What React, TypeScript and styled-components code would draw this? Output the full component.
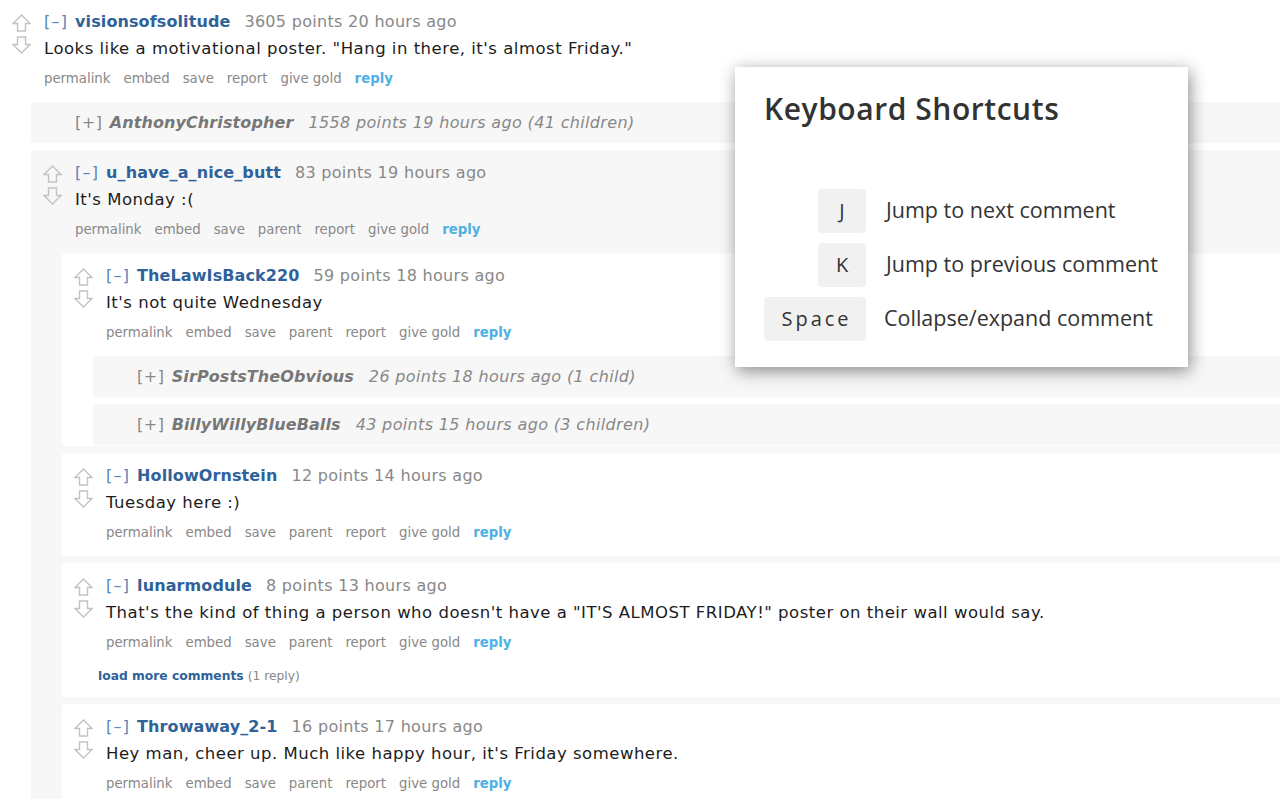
import React from "react";
import styled, { createGlobalStyle } from "styled-components";

const GlobalStyle = createGlobalStyle`
  html, body {
    margin: 0;
    padding: 0;
    background: #ffffff;
    overflow: hidden;
  }
  body {
    font-family: "DejaVu Sans", Verdana, sans-serif;
    width: 1280px;
    height: 800px;
  }
`;

type CommentData = {
  user: string;
  points: number;
  time: string;
  body?: string;
  collapsed?: boolean;
  count?: string;
  showParent?: boolean;
  loadMore?: string;
  children?: CommentData[];
};

const data: CommentData = {
  user: "visionsofsolitude",
  points: 3605,
  time: "20 hours ago",
  body: 'Looks like a motivational poster. "Hang in there, it\'s almost Friday."',
  showParent: false,
  children: [
    {
      collapsed: true,
      user: "AnthonyChristopher",
      points: 1558,
      time: "19 hours ago",
      count: "41 children",
    },
    {
      user: "u_have_a_nice_butt",
      points: 83,
      time: "19 hours ago",
      body: "It's Monday :(",
      showParent: true,
      children: [
        {
          user: "TheLawIsBack220",
          points: 59,
          time: "18 hours ago",
          body: "It's not quite Wednesday",
          showParent: true,
          children: [
            {
              collapsed: true,
              user: "SirPostsTheObvious",
              points: 26,
              time: "18 hours ago",
              count: "1 child",
            },
            {
              collapsed: true,
              user: "BillyWillyBlueBalls",
              points: 43,
              time: "15 hours ago",
              count: "3 children",
            },
          ],
        },
        {
          user: "HollowOrnstein",
          points: 12,
          time: "14 hours ago",
          body: "Tuesday here :)",
          showParent: true,
        },
        {
          user: "lunarmodule",
          points: 8,
          time: "13 hours ago",
          body: 'That\'s the kind of thing a person who doesn\'t have a "IT\'S ALMOST FRIDAY!" poster on their wall would say.',
          showParent: true,
          loadMore: "1 reply",
        },
        {
          user: "Throwaway_2-1",
          points: 16,
          time: "17 hours ago",
          body: "Hey man, cheer up. Much like happy hour, it's Friday somewhere.",
          showParent: true,
        },
      ],
    },
  ],
};

const Page = styled.div`
  position: relative;
  width: 1280px;
  height: 800px;
  overflow: hidden;
  margin-top: -1px;
`;

const Box = styled.div<{ $depth: number }>`
  background: ${(p) => (p.$depth === 0 ? "transparent" : p.$depth % 2 === 1 ? "#f7f7f7" : "#ffffff")};
  border-radius: ${(p) => (p.$depth === 0 ? "0" : "3px 0 0 3px")};
  padding-left: 12px;
`;

const Entry = styled.div`
  display: flex;
  padding-top: 12px;
`;

const Arrows = styled.div`
  width: 19px;
  flex: none;
  display: flex;
  flex-direction: column;
  gap: 4px;
  padding-top: 3px;
  margin-right: 13px;
`;

const Main = styled.div`
  flex: 1;
  min-width: 0;
`;

const Tagline = styled.div`
  font-size: 16px;
  line-height: 20px;
  padding-top: 1px;
  color: #888888;
  white-space: nowrap;
  letter-spacing: 0.3px;
`;

const Toggle = styled.span`
  color: #5b86b6;
  margin-right: 7px;
  letter-spacing: 1.2px;
`;

const User = styled.span`
  color: #2f6299;
  font-weight: bold;
  margin-right: 14px;
  letter-spacing: 0.1px;
`;

const Body = styled.div`
  margin-top: 7px;
  font-size: 16.5px;
  line-height: 20px;
  letter-spacing: 0.5px;
  color: #1c1c1c;
  white-space: nowrap;
`;

const Buttons = styled.ul`
  list-style: none;
  margin: 10px 0 0;
  padding: 0;
  display: flex;
  gap: 13px;
  font-size: 13.3px;
  line-height: 20px;
  color: #888888;
`;

const Btn = styled.li<{ $reply?: boolean }>`
  color: ${(p) => (p.$reply ? "#4eb0e4" : "#888888")};
  font-weight: ${(p) => (p.$reply ? "bold" : "normal")};
`;

const Children = styled.div`
  margin-left: 19px;
  margin-top: 13px;
  display: flex;
  flex-direction: column;
  gap: 7px;
  padding-bottom: 1px;
`;

const LeafSpacer = styled.div`
  height: 13px;
`;

const LoadMore = styled.div`
  margin: 13px 0 0 -8px;
  font-size: 12.3px;
  line-height: 20px;
  color: #888888;
  padding-bottom: 11px;
`;

const LoadLink = styled.span`
  color: #2f6299;
  font-weight: bold;
  margin-right: 4px;
`;

const Collapsed = styled.div<{ $depth: number }>`
  background: ${(p) => (p.$depth % 2 === 1 ? "#f7f7f7" : "#ffffff")};
  border-radius: 3px 0 0 3px;
  height: 41px;
  display: flex;
  align-items: center;
  padding-left: 44px;
  font-size: 16px;
  color: #888888;
  white-space: nowrap;
`;

const CollapsedBracket = styled.span`
  color: #888888;
  margin-right: 7px;
  letter-spacing: 0.6px;
`;

const CollapsedUser = styled.span`
  font-style: italic;
  font-weight: bold;
  color: #777777;
  margin-right: 15px;
  letter-spacing: 0.1px;
`;

const CollapsedMeta = styled.span`
  font-style: italic;
  color: #888888;
  letter-spacing: 0.35px;
`;

const Arrow = ({ down }: { down?: boolean }) => (
  <svg width="19" height="18" viewBox="0 0 19 18" style={{ display: "block" }}>
    <path
      d={
        down
          ? "M9.5 17 L18 8.5 L13.5 8.5 L13.5 1 L5.5 1 L5.5 8.5 L1 8.5 Z"
          : "M9.5 1 L18 9.5 L13.5 9.5 L13.5 17 L5.5 17 L5.5 9.5 L1 9.5 Z"
      }
      fill="none"
      stroke="#c2c2c2"
      strokeWidth="1.4"
      strokeLinejoin="miter"
    />
  </svg>
);

const Comment = ({ c, depth }: { c: CommentData; depth: number }) => {
  if (c.collapsed) {
    return (
      <Collapsed $depth={depth}>
        <CollapsedBracket>[+]</CollapsedBracket>
        <CollapsedUser>{c.user}</CollapsedUser>
        <CollapsedMeta>
          {c.points} points {c.time} ({c.count})
        </CollapsedMeta>
      </Collapsed>
    );
  }
  const buttons = ["permalink", "embed", "save", ...(c.showParent ? ["parent"] : []), "report", "give gold"];
  return (
    <Box $depth={depth}>
      <Entry>
        <Arrows>
          <Arrow />
          <Arrow down />
        </Arrows>
        <Main>
          <Tagline>
            <Toggle>[–]</Toggle>
            <User>{c.user}</User>
            {c.points} points {c.time}
          </Tagline>
          <Body>{c.body}</Body>
          <Buttons>
            {buttons.map((b) => (
              <Btn key={b}>{b}</Btn>
            ))}
            <Btn $reply>reply</Btn>
          </Buttons>
          {c.loadMore && (
            <LoadMore>
              <LoadLink>load more comments</LoadLink>({c.loadMore})
            </LoadMore>
          )}
        </Main>
      </Entry>
      {c.children && c.children.length > 0 ? (
        <Children>
          {c.children.map((ch) => (
            <Comment key={ch.user} c={ch} depth={depth + 1} />
          ))}
        </Children>
      ) : c.loadMore ? null : (
        <LeafSpacer />
      )}
    </Box>
  );
};

const Modal = styled.div`
  position: absolute;
  left: 735px;
  top: 68px;
  width: 453px;
  height: 300px;
  box-sizing: border-box;
  background: #ffffff;
  box-shadow: 2px 4px 16px rgba(0, 0, 0, 0.45);
  padding: 22px 20px 26px 28px;
  font-family: "Open Sans", "Noto Sans", sans-serif;
  color: #333333;
`;

const Title = styled.h2`
  margin: 0 0 0 1px;
  font-size: 30px;
  line-height: 40px;
  font-weight: 600;
  letter-spacing: 0.55px;
`;

const Shortcuts = styled.div`
  margin-top: 60px;
  display: grid;
  grid-template-columns: 103px 1fr;
  column-gap: 20px;
  row-gap: 10px;
  align-items: center;
`;

const Key = styled.div<{ $wide?: boolean }>`
  justify-self: end;
  height: 44px;
  width: ${(p) => (p.$wide ? "102px" : "48px")};
  box-sizing: border-box;
  padding-left: ${(p) => (p.$wide ? "3px" : "0")};
  padding-bottom: 2px;
  background: #f1f1f1;
  border-radius: 4px;
  display: flex;
  align-items: center;
  justify-content: center;
  font-size: 20px;
  letter-spacing: ${(p) => (p.$wide ? "3px" : "0")};
`;

const Desc = styled.div<{ $shift?: number }>`
  font-size: 21.5px;
  white-space: nowrap;
  padding-bottom: 4px;
  margin-left: ${(p) => p.$shift ?? 0}px;
`;

const shortcuts = [
  { key: "J", desc: "Jump to next comment" },
  { key: "K", desc: "Jump to previous comment" },
  { key: "Space", desc: "Collapse/expand comment", wide: true },
];

export default function App() {
  return (
    <>
      <GlobalStyle />
      <Page>
        <Comment c={data} depth={0} />
        <Modal>
          <Title>Keyboard Shortcuts</Title>
          <Shortcuts>
            {shortcuts.map((s) => (
              <React.Fragment key={s.key}>
                <Key $wide={s.wide}>{s.key}</Key>
                <Desc $shift={s.wide ? -2 : 0}>{s.desc}</Desc>
              </React.Fragment>
            ))}
          </Shortcuts>
        </Modal>
      </Page>
    </>
  );
}
